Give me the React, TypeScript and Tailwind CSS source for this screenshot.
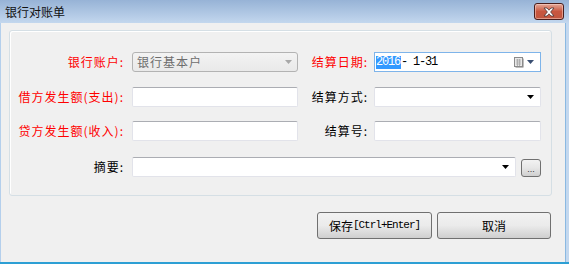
import React from "react";

const cjk = '"Noto Sans CJK SC", "Noto Sans", sans-serif';

function Label({ text, red, w }: { text: string; red?: boolean; w: number }) {
  return (
    <div
      className={`flex items-center justify-end shrink-0 text-[12px] tracking-[1px] leading-none ${red ? "text-[#ff0000]" : "text-black"}`}
      style={{ width: w }}
    >
      {text}
    </div>
  );
}

function TextBox({ w }: { w: number }) {
  return (
    <div
      className="h-[20px] shrink-0 bg-white border border-[#e2e3ea] border-t-[#abadb3] rounded-[2px]"
      style={{ width: w }}
    />
  );
}

function Arrow({ color = "#000" }: { color?: string }) {
  return (
    <svg width="7" height="4" viewBox="0 0 7 4">
      <path d="M0 0 H7 L3.5 4 Z" fill={color} />
    </svg>
  );
}

function Combo({ w }: { w: number }) {
  return (
    <div
      className="h-[20px] shrink-0 bg-white border border-[#e2e3ea] border-t-[#abadb3] rounded-[2px] flex items-center justify-end pr-[6px]"
      style={{ width: w }}
    >
      <Arrow />
    </div>
  );
}

export default function App() {
  return (
    <div
      className="w-[569px] h-[264px] flex flex-col bg-[#c3d8ef] overflow-hidden"
      style={{ fontFamily: cjk }}
    >
      {/* Title bar */}
      <div className="h-[23px] shrink-0 relative flex items-center pl-[5px] bg-gradient-to-b from-[#97b3d6] to-[#c3d7ee]">
        <span className="text-[12px] text-[#111] leading-none">银行对账单</span>
        <div className="absolute right-[5px] top-[3px] w-[30px] h-[17px] rounded-[3px] border border-[#4a1e1c] bg-gradient-to-b from-[#e3a899] via-[#c8563f] to-[#c1563f] flex items-center justify-center shadow-[inset_0_0_0_1px_rgba(255,220,210,0.5)]">
          <svg width="14" height="10" viewBox="0 0 14 10">
            <path
              d="M2 1 L5 1 L7 3.2 L9 1 L12 1 L8.6 5 L12 9 L9 9 L7 6.8 L5 9 L2 9 L5.4 5 Z"
              fill="#ffffff"
              stroke="#4a3333"
              strokeWidth="0.8"
            />
          </svg>
        </div>
      </div>

      {/* Body row */}
      <div className="flex h-[239px] shrink-0">
        <div className="w-[1px] bg-[#b4cfec]" />
        <div className="w-[565px] bg-[#f0f0f0] flex flex-col border-r border-[#8ab9e2]">
          {/* group box */}
          <div className="mt-[7px] ml-[8px] w-[543px] h-[166px] border border-[#d5dfe5] rounded-[3px] shadow-[inset_1px_1px_0_#ffffff] flex flex-col pt-[21px]">
            {/* Row 1 */}
            <div className="flex h-[20px]">
              <Label text="银行账户:" red w={114} />
              <div className="ml-[8px] w-[166px] h-[20px] rounded-[3px] border border-[#b3b3b3] bg-gradient-to-b from-[#f3f3f3] to-[#e9e9e9] flex items-center pl-[4px] pr-[5px]">
                <span className="text-[12px] text-[#6d6d6d] leading-none flex-1 tracking-[1px]">银行基本户</span>
                <Arrow color="#a8a8a8" />
              </div>
              <Label text="结算日期:" red w={70} />
              <div className="ml-[6px] w-[167px] h-[20px] bg-white border border-[#7eb4ea] flex items-center pl-[1px] pr-[6px]">
                <div
                  className="flex-1 flex items-center text-[12px] tracking-[-1.2px] leading-none"
                  style={{ fontFamily: '"Liberation Mono", monospace' }}
                >
                  <span className="bg-[#3399ff] text-white h-[13px] flex items-center pr-[1px]">2016</span>
                  <span className="text-black whitespace-pre">- 1-31</span>
                </div>
                <svg width="11" height="11" viewBox="0 0 11 11" className="mr-[2px]">
                  <rect x="1.5" y="1.5" width="8" height="9" fill="#7d7d7d" />
                  <rect x="0.5" y="0.5" width="8" height="9" fill="#e8e8e8" stroke="#8a8a8a" />
                  <path d="M2 3 H7 M2 5 H7 M2 7 H7 M3.5 2 V9 M5.5 2 V9" stroke="#a6a6a6" strokeWidth="0.8" />
                </svg>
                <Arrow color="#3a4f72" />
              </div>
            </div>
            {/* Row 2 */}
            <div className="flex h-[20px] mt-[15px]">
              <Label text="借方发生额(支出):" red w={114} />
              <div className="ml-[8px]"><TextBox w={166} /></div>
              <Label text="结算方式:" w={70} />
              <div className="ml-[6px]"><Combo w={167} /></div>
            </div>
            {/* Row 3 */}
            <div className="flex h-[20px] mt-[14px]">
              <Label text="贷方发生额(收入):" red w={114} />
              <div className="ml-[8px]"><TextBox w={166} /></div>
              <Label text="结算号:" w={70} />
              <div className="ml-[6px]"><TextBox w={167} /></div>
            </div>
            {/* Row 4 */}
            <div className="flex h-[20px] mt-[16px]">
              <Label text="摘要:" w={114} />
              <div className="ml-[8px]"><Combo w={384} /></div>
              <div className="ml-[5px] mt-[2px] w-[20px] h-[18px] rounded-[3px] border border-[#707070] bg-gradient-to-b from-[#f2f2f2] via-[#e6e6e6] to-[#cfcfcf] flex items-end justify-center pb-[2px]">
                <span className="text-[9px] leading-none text-[#333]" style={{ fontFamily: '"Liberation Sans", sans-serif' }}>...</span>
              </div>
            </div>
          </div>

          {/* Buttons */}
          <div className="flex justify-end gap-[5px] pr-[14px] mt-[16px]">
            <div className="w-[115px] h-[27px] rounded-[3px] border border-[#707070] bg-gradient-to-b from-[#f2f2f2] via-[#ebebeb] to-[#cfcfcf] flex items-center justify-center">
              <span className="text-[12px] leading-none text-black">保存</span>
              <span
                className="text-[11px] tracking-[-1px] leading-none text-black"
                style={{ fontFamily: '"Liberation Mono", monospace' }}
              >
                [Ctrl+Enter]
              </span>
            </div>
            <div className="w-[114px] h-[27px] rounded-[3px] border border-[#707070] bg-gradient-to-b from-[#f2f2f2] via-[#ebebeb] to-[#cfcfcf] flex items-center justify-center">
              <span className="text-[12px] leading-none text-black">取消</span>
            </div>
          </div>
        </div>
        <div className="flex-1 bg-[#c3d8ef]" />
      </div>
      <div className="h-[2px] shrink-0 bg-[#2d9fd4]" />
    </div>
  );
}
